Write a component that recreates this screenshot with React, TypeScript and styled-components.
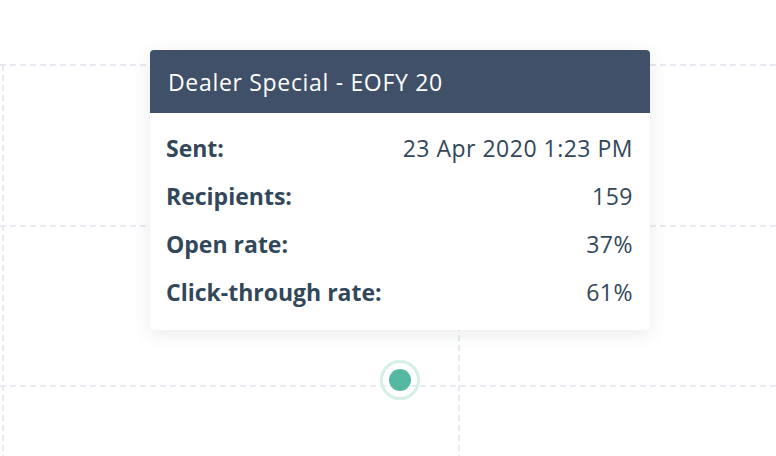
import styled, { createGlobalStyle } from "styled-components";

const GlobalStyle = createGlobalStyle`
  html, body {
    margin: 0;
    padding: 0;
    background: #ffffff;
    font-family: "Open Sans", Lato, sans-serif;
  }
`;

const rows = [
  { label: "Sent:", value: "23 Apr 2020 1:23 PM" },
  { label: "Recipients:", value: "159" },
  { label: "Open rate:", value: "37%" },
  { label: "Click-through rate:", value: "61%" },
];

const Stage = styled.div`
  position: relative;
  width: 776px;
  height: 456px;
  overflow: hidden;
  background: #ffffff;
`;

const Grid = styled.svg`
  position: absolute;
  left: 0;
  top: 0;
`;

const Tooltip = styled.div`
  position: absolute;
  left: 150px;
  top: 50px;
  width: 500px;
  background: #ffffff;
  border-radius: 4px;
  box-shadow: 0 4px 18px rgba(45, 62, 80, 0.1);
  overflow: hidden;
`;

const Header = styled.div`
  height: 63px;
  background: #3f5068;
  color: #ffffff;
  display: flex;
  align-items: center;
  padding: 0 18px;
  font-size: 23px;
  letter-spacing: 0.68px;
`;

const Body = styled.div`
  padding: 11px 17px 14px 16px;
  display: flex;
  flex-direction: column;
`;

const Row = styled.div`
  height: 48px;
  display: flex;
  align-items: center;
  justify-content: space-between;
  color: #33475b;
  font-size: 23px;
`;

const Label = styled.span`
  font-weight: 700;
`;

const Value = styled.span`
  font-weight: 400;
  letter-spacing: 0.5px;
`;

const Dot = styled.div`
  position: absolute;
  left: 380px;
  top: 360px;
  width: 34px;
  height: 34px;
  border-radius: 50%;
  border: 3px solid #d6efe9;
  display: flex;
  align-items: center;
  justify-content: center;

  &::after {
    content: "";
    width: 22px;
    height: 22px;
    border-radius: 50%;
    background: #55b9a1;
  }
`;

export default function App() {
  return (
    <>
      <GlobalStyle />
      <Stage>
        <Grid width="776" height="456">
          <g stroke="#dfe3eb" strokeWidth="1.5" strokeDasharray="6 4" fill="none">
            <line x1="0" y1="65" x2="776" y2="65" />
            <line x1="0" y1="226" x2="776" y2="226" />
            <line x1="0" y1="386" x2="776" y2="386" />
            <line x1="3" y1="65" x2="3" y2="456" />
            <line x1="459" y1="65" x2="459" y2="456" />
          </g>
        </Grid>
        <Tooltip>
          <Header>Dealer Special - EOFY 20</Header>
          <Body>
            {rows.map((r) => (
              <Row key={r.label}>
                <Label>{r.label}</Label>
                <Value>{r.value}</Value>
              </Row>
            ))}
          </Body>
        </Tooltip>
        <Dot />
      </Stage>
    </>
  );
}
